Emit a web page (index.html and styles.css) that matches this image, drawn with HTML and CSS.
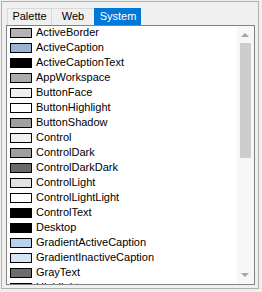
FILE: index.html
```html
<!DOCTYPE html>
<html>
<head>
<meta charset="utf-8">
<link rel="stylesheet" href="styles.css">
</head>
<body>
<div class="frame">
  <div class="tabs">
    <div class="tab tab-palette">Palette</div>
    <div class="tab tab-web">Web</div>
    <div class="tab tab-system active">System</div>
  </div>
  <div class="list">
    <div class="items">
      <div class="row"><span class="sw" style="background:#b4b4b4"></span><span class="name">ActiveBorder</span></div>
      <div class="row"><span class="sw" style="background:#99b4d1"></span><span class="name">ActiveCaption</span></div>
      <div class="row"><span class="sw" style="background:#000000"></span><span class="name">ActiveCaptionText</span></div>
      <div class="row"><span class="sw" style="background:#ababab"></span><span class="name">AppWorkspace</span></div>
      <div class="row"><span class="sw" style="background:#f0f0f0"></span><span class="name">ButtonFace</span></div>
      <div class="row"><span class="sw" style="background:#ffffff"></span><span class="name">ButtonHighlight</span></div>
      <div class="row"><span class="sw" style="background:#a0a0a0"></span><span class="name">ButtonShadow</span></div>
      <div class="row"><span class="sw" style="background:#f0f0f0"></span><span class="name">Control</span></div>
      <div class="row"><span class="sw" style="background:#a0a0a0"></span><span class="name">ControlDark</span></div>
      <div class="row"><span class="sw" style="background:#696969"></span><span class="name">ControlDarkDark</span></div>
      <div class="row"><span class="sw" style="background:#e3e3e3"></span><span class="name">ControlLight</span></div>
      <div class="row"><span class="sw" style="background:#ffffff"></span><span class="name">ControlLightLight</span></div>
      <div class="row"><span class="sw" style="background:#000000"></span><span class="name">ControlText</span></div>
      <div class="row"><span class="sw" style="background:#000000"></span><span class="name">Desktop</span></div>
      <div class="row"><span class="sw" style="background:#b9d1ea"></span><span class="name">GradientActiveCaption</span></div>
      <div class="row"><span class="sw" style="background:#d7e4f2"></span><span class="name">GradientInactiveCaption</span></div>
      <div class="row"><span class="sw" style="background:#6d6d6d"></span><span class="name">GrayText</span></div>
      <div class="row"><span class="sw" style="background:#0078d7"></span><span class="name">Highlight</span></div>
    </div>
    <div class="scrollbar">
      <svg class="arrow" width="17" height="17" viewBox="0 0 17 17"><polygon points="4,11 12,11 8,7" fill="#a6a6a6"/></svg>
      <div class="track"><div class="thumb"></div></div>
      <svg class="arrow" width="17" height="17" viewBox="0 0 17 17"><polygon points="4,6 12,6 8,10" fill="#a6a6a6"/></svg>
    </div>
  </div>
</div>
</body>
</html>
```
FILE: styles.css
```css
html, body {
  margin: 0;
  padding: 0;
}
body {
  background: #f0f0f0;
  font-family: "Liberation Sans", Arial, sans-serif;
  font-size: 11px;
  color: #000;
  width: 262px;
  height: 292px;
  overflow: hidden;
}
.frame {
  box-sizing: border-box;
  margin: 1px 0 0 1px;
  width: 258px;
  height: 288px;
  border: 1px solid #b0b0b0;
  padding: 6px 0 0 4px;
}
.tabs {
  display: flex;
  margin-left: 1px;
  height: 17px;
}
.tab {
  box-sizing: border-box;
  height: 17px;
  border: 1px solid #d9d9d9;
  border-bottom: none;
  border-right: none;
  background: #f0f0f0;
  line-height: 15px;
  text-align: center;
}
.tab-palette { width: 44px; }
.tab-web { width: 43px; }
.tab-system { width: 47px; }
.tab.active {
  background: #0078d7;
  border-color: #0078d7;
  color: #fff;
}
.list {
  box-sizing: border-box;
  width: 249px;
  height: 260px;
  border: 1px solid #828282;
  background: #fff;
  display: flex;
  overflow: hidden;
}
.items {
  flex: 1;
  overflow: hidden;
}
.row {
  height: 15px;
  display: flex;
  align-items: flex-start;
  padding-left: 3px;
  white-space: nowrap;
}
.sw {
  box-sizing: border-box;
  flex: none;
  width: 22px;
  height: 10px;
  margin-top: 2px;
  border: 1px solid #000;
}
.name {
  margin-left: 4px;
  line-height: 13px;
}
.scrollbar {
  width: 17px;
  flex: none;
  display: flex;
  flex-direction: column;
  background: #f7f7f7;
}
.arrow {
  display: block;
  flex: none;
}
.track {
  flex: 1;
  padding-top: 0;
}
.thumb {
  margin-left: 3px;
  width: 11px;
  height: 115px;
  background: #cdcdcd;
}
```
